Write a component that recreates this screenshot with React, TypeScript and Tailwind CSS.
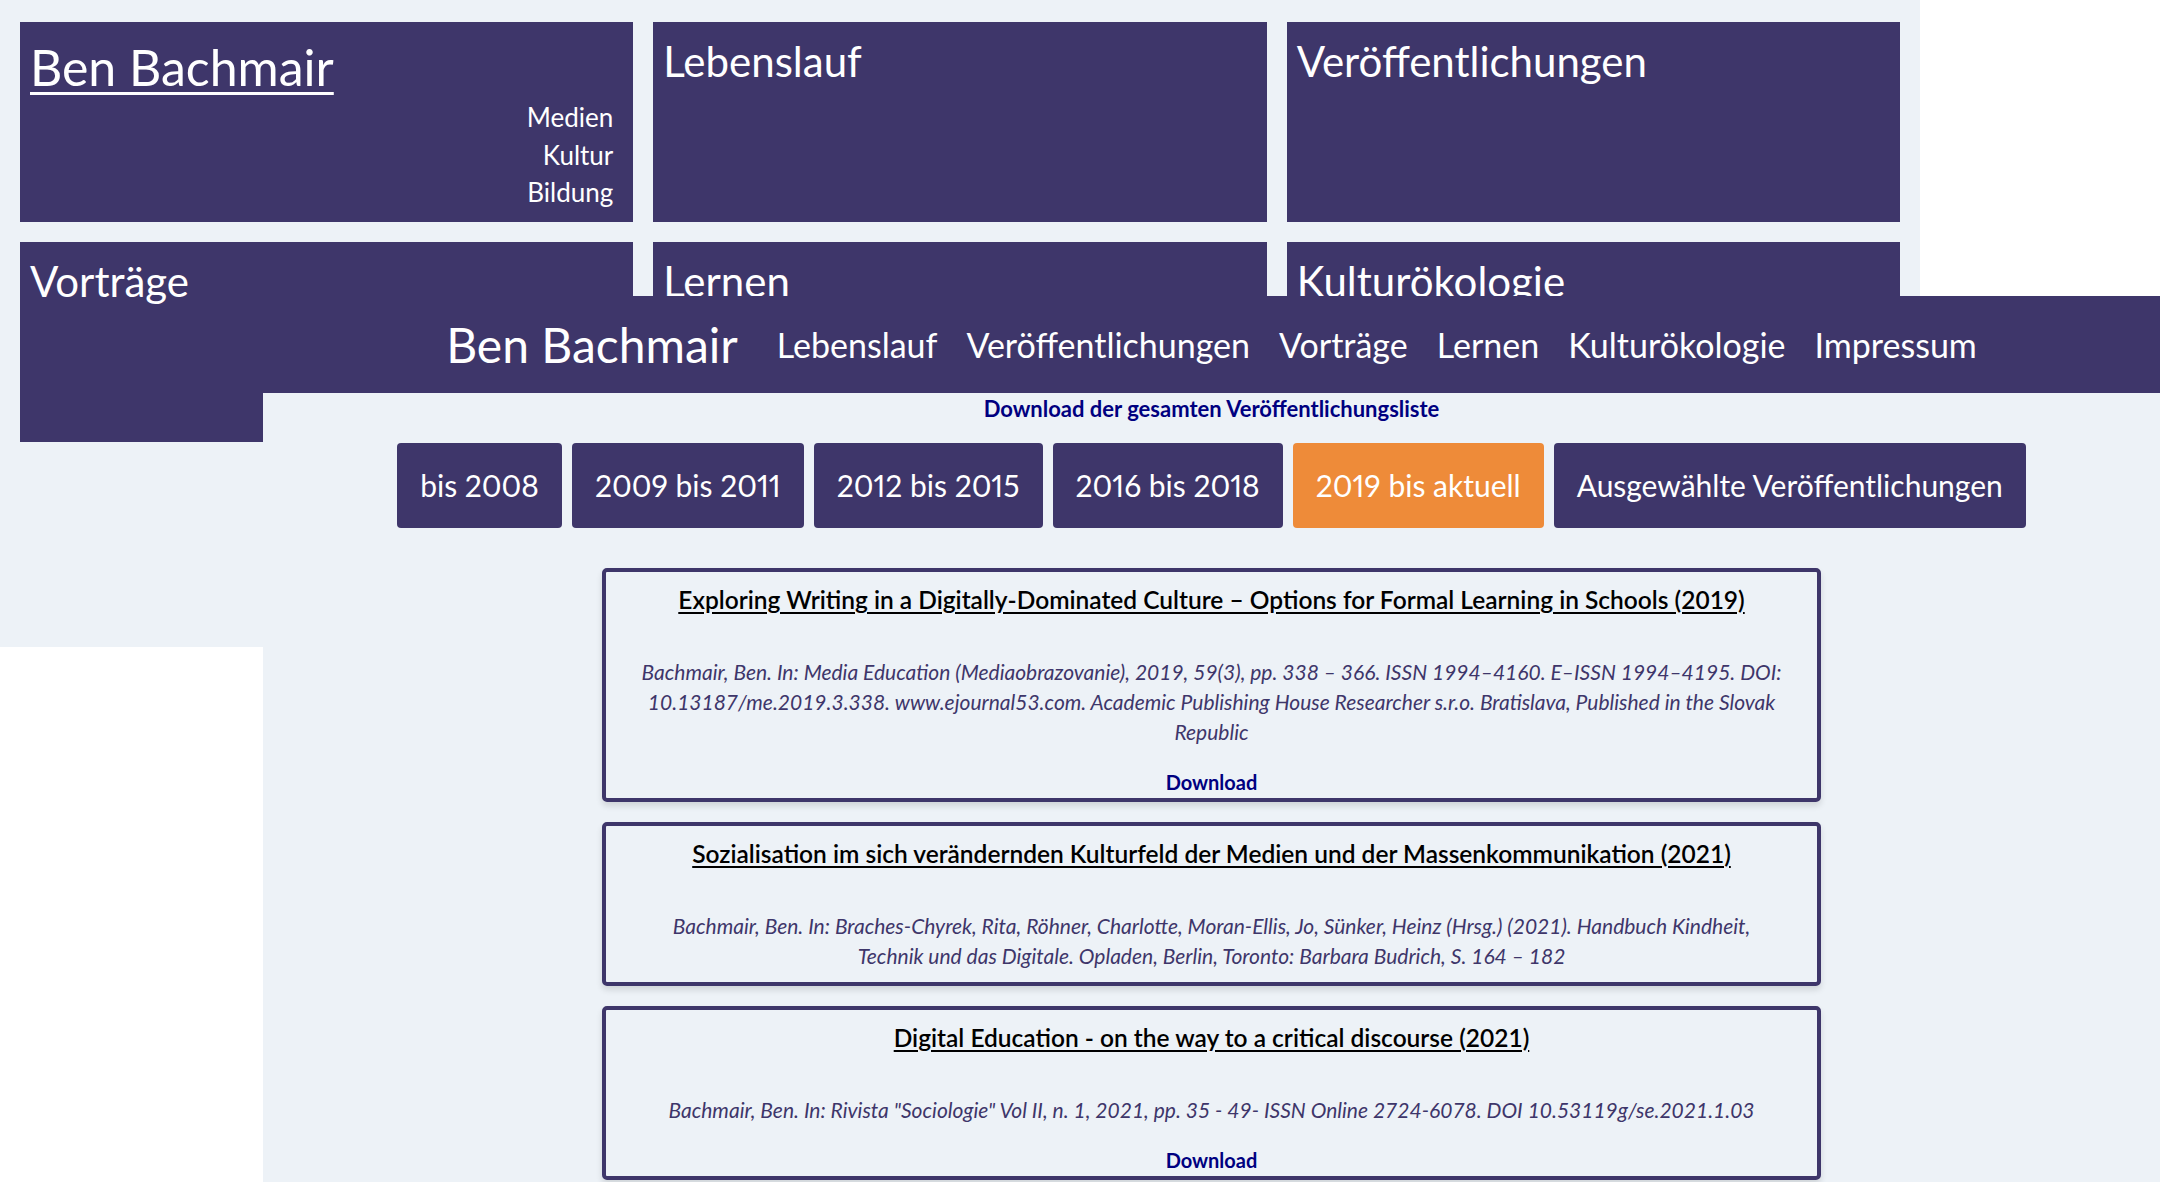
import React from "react";

const PURPLE = "bg-[#3e366a]";

function Tile({ title, children }: { title: React.ReactNode; children?: React.ReactNode }) {
  return (
    <div className={`${PURPLE} h-[200px] px-[10px] pt-[15px] text-white`}>
      {title}
      {children}
    </div>
  );
}

function TileTitle({ text }: { text: string }) {
  return <h2 className="text-[42px] leading-[48px] font-normal">{text}</h2>;
}

const navItems = ["Lebenslauf", "Veröffentlichungen", "Vorträge", "Lernen", "Kulturökologie", "Impressum"];
const ranges = ["bis 2008", "2009 bis 2011", "2012 bis 2015", "2016 bis 2018", "2019 bis aktuell", "Ausgewählte Veröffentlichungen"];

type Pub = { title: string; cite: string; download: boolean };

const pubs: Pub[] = [
  {
    title:
      "Exploring Writing in a Digitally-Dominated Culture – Options for Formal Learning in Schools (2019)",
    cite:
      "Bachmair, Ben. In: Media Education (Mediaobrazovanie), 2019, 59(3), pp. 338 – 366. ISSN 1994–4160. E–ISSN 1994–4195. DOI: 10.13187/me.2019.3.338. www.ejournal53.com. Academic Publishing House Researcher s.r.o. Bratislava, Published in the Slovak Republic",
    download: true,
  },
  {
    title:
      "Sozialisation im sich verändernden Kulturfeld der Medien und der Massenkommunikation (2021)",
    cite:
      "Bachmair, Ben. In: Braches-Chyrek, Rita, Röhner, Charlotte, Moran-Ellis, Jo, Sünker, Heinz (Hrsg.) (2021). Handbuch Kindheit, Technik und das Digitale. Opladen, Berlin, Toronto: Barbara Budrich, S. 164 – 182",
    download: false,
  },
  {
    title: "Digital Education - on the way to a critical discourse (2021)",
    cite:
      'Bachmair, Ben. In: Rivista "Sociologie" Vol II, n. 1, 2021, pp. 35 - 49- ISSN Online 2724-6078. DOI 10.53119g/se.2021.1.03',
    download: true,
  },
];

export default function App() {
  return (
    <div className="relative h-[1182px] w-full overflow-hidden bg-white font-['Lato',sans-serif]">
      {/* background tile page */}
      <div className="w-[1920px] h-[647px] bg-[#edf2f7] px-[20px] pt-[22px]">
        <div className="grid grid-cols-3 gap-[20px]">
          <Tile
            title={
              <a className="block text-[50px] leading-[60px] underline decoration-[3px] underline-offset-[6px]">
                Ben Bachmair
              </a>
            }
          >
            <div className="mt-[2px] flex flex-col items-end pr-[10px] text-[26px] leading-[37.5px]">
              <span>Medien</span>
              <span>Kultur</span>
              <span>Bildung</span>
            </div>
          </Tile>
          <Tile title={<TileTitle text="Lebenslauf" />} />
          <Tile title={<TileTitle text="Veröffentlichungen" />} />
          <Tile title={<TileTitle text="Vorträge" />} />
          <Tile title={<TileTitle text="Lernen" />} />
          <Tile title={<TileTitle text="Kulturökologie" />} />
        </div>
      </div>

      {/* overlay page */}
      <div className="absolute left-[263px] top-[296px] right-0 bg-[#edf2f7] pb-[60px]">
        <nav className={`${PURPLE} h-[97px] flex items-center justify-center gap-[29px] text-white`}>
          <span className="mr-[10px] text-[48px] leading-none">Ben Bachmair</span>
          {navItems.map((n) => (
            <span key={n} className="text-[34px] leading-none">
              {n}
            </span>
          ))}
        </nav>

        <div className="mt-[3px] text-center text-[22px] leading-[26px] font-bold text-[#000080]">
          Download der gesamten Veröffentlichungsliste
        </div>

        <div className="mt-[21px] flex justify-center gap-[10px]">
          {ranges.map((r) => (
            <div
              key={r}
              className={`h-[85px] px-[23px] rounded-[4px] flex items-center text-[30px] proportional-nums text-white ${
                r === "2019 bis aktuell" ? "bg-[#ee8b39]" : PURPLE
              }`}
            >
              {r}
            </div>
          ))}
        </div>

        <div className="mt-[40px] flex flex-col items-center gap-[20px]">
          {pubs.map((p) => (
            <div
              key={p.title}
              className="w-[1219px] rounded-[5px] border-4 border-[#3e366a] px-[34px] pt-[12px] pb-[2px] text-center shadow-[0_4px_6px_rgba(0,0,0,0.12)]"
            >
              <a className="block text-[24.5px] leading-[32px] font-semibold text-black underline underline-offset-[3px]">
                {p.title}
              </a>
              <p className="mt-[41px] mb-[9px] text-[21px] leading-[30px] italic text-[#3e366a]">{p.cite}</p>
              {p.download && (
                <a className="mt-[21px] block text-[20px] leading-[28px] font-bold text-[#000080]">Download</a>
              )}
            </div>
          ))}
        </div>
      </div>
    </div>
  );
}
